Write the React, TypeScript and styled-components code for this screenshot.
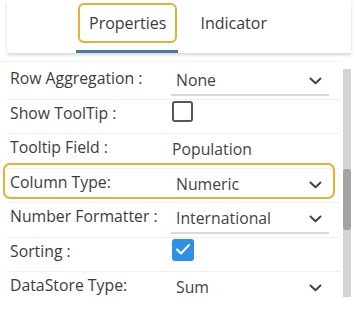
import styled, { createGlobalStyle } from 'styled-components';

const GlobalStyle = createGlobalStyle`
  html, body { margin: 0; padding: 0; background: #fff; }
  body { font-family: "Open Sans", Lato, sans-serif; color: #3d3d3d; }
  * { box-sizing: border-box; }
`;

const Page = styled.div`
  width: 359px;
  height: 325px;
  overflow: hidden;
  background: #fff;
`;

const Header = styled.div`
  margin: 0 8px 0 7px;
  height: 53px;
  background: #fff;
  box-shadow: 0 2px 3px rgba(0, 0, 0, 0.16);
  display: flex;
  align-items: flex-start;
  gap: 16px;
  padding-left: 69px;
`;

const Tab = styled.div<{ $active?: boolean }>`
  padding: 3px 1px 7px 2px;
  border-bottom: 3px solid ${p => (p.$active ? '#4877a6' : 'transparent')};
`;

const TabLabel = styled.div<{ $active?: boolean }>`
  height: 40px;
  display: flex;
  align-items: center;
  padding: 0 ${p => (p.$active ? '9px' : '2px')};
  border: 2px solid ${p => (p.$active ? '#e9ae32' : 'transparent')};
  border-radius: 6px;
  font-size: 16px;
  color: #3b3b3b;
`;

const Body = styled.div`
  display: flex;
  margin-top: 8px;
  height: 236px;
`;

const List = styled.div`
  flex: 1;
  overflow: hidden;
  border-top: 1px solid #f3f3f3;
  padding-top: 3px;
`;

const Row = styled.div<{ $highlight?: boolean }>`
  position: relative;
  height: 34.5px;
  margin-left: 7px;
  padding-left: 3px;
  display: grid;
  grid-template-columns: 161px 158px;
  align-items: start;
  border-bottom: 1px solid #f0f0f0;

  ${p =>
    p.$highlight &&
    `
    &::after {
      content: '';
      position: absolute;
      left: -4px;
      right: 5px;
      top: -6px;
      bottom: 3.5px;
      border: 2px solid #e9ae32;
      border-radius: 7px;
      pointer-events: none;
    }
  `}
`;

const Label = styled.div`
  padding-top: 3px;
  line-height: 20px;
  font-size: 15.8px;
  color: #3d3d3d;
  white-space: nowrap;
`;

const Select = styled.div<{ $plain?: boolean; $pad?: number }>`
  margin-top: 5px;
  height: 26px;
  display: flex;
  align-items: center;
  justify-content: space-between;
  padding: 0 7px 2px ${p => p.$pad ?? 5}px;
  border-bottom: 2px solid ${p => (p.$plain ? 'transparent' : '#d9d9d9')};
  font-size: 15.8px;
  line-height: 1;
  color: #444;
`;

const Checkbox = styled.div<{ $checked?: boolean }>`
  margin: 1px 0 0 1px;
  width: ${p => (p.$checked ? 22 : 21)}px;
  height: ${p => (p.$checked ? 22 : 21)}px;
  border-radius: 3px;
  border: ${p => (p.$checked ? 'none' : '2px solid #565656')};
  background: ${p => (p.$checked ? '#2f8ee6' : '#fff')};
  display: flex;
  align-items: center;
  justify-content: center;
`;

const Track = styled.div`
  width: 8px;
  margin: 8px 8px 0 3px;
  background: #d4d4d4;
`;

const Thumb = styled.div`
  margin-top: 100px;
  height: 61px;
  background: #a3a3a3;
  border-radius: 3px;
`;

const Chevron = () => (
  <svg width="13" height="8" viewBox="0 0 13 8">
    <polyline points="1.5,1.5 6.5,6.2 11.5,1.5" fill="none" stroke="#444" strokeWidth="2" strokeLinecap="round" strokeLinejoin="round" />
  </svg>
);

const Check = () => (
  <svg width="16" height="13" viewBox="0 0 16 13">
    <polyline points="2,6.5 6,10.5 14,2" fill="none" stroke="#fff" strokeWidth="2" strokeLinecap="round" strokeLinejoin="round" />
  </svg>
);

export default function App() {
  return (
    <Page>
      <GlobalStyle />
      <Header>
        <Tab $active>
          <TabLabel $active>Properties</TabLabel>
        </Tab>
        <Tab>
          <TabLabel>Indicator</TabLabel>
        </Tab>
      </Header>
      <Body>
        <List>
          <Row>
            <Label>Row Aggregation :</Label>
            <Select>None<Chevron /></Select>
          </Row>
          <Row>
            <Label>Show ToolTip :</Label>
            <Checkbox />
          </Row>
          <Row>
            <Label>Tooltip Field :</Label>
            <Select $pad={1}>Population</Select>
          </Row>
          <Row $highlight>
            <Label>Column Type:</Label>
            <Select $plain>Numeric<Chevron /></Select>
          </Row>
          <Row>
            <Label>Number Formatter :</Label>
            <Select>International<Chevron /></Select>
          </Row>
          <Row>
            <Label>Sorting :</Label>
            <Checkbox $checked><Check /></Checkbox>
          </Row>
          <Row>
            <Label>DataStore Type:</Label>
            <Select>Sum<Chevron /></Select>
          </Row>
        </List>
        <Track>
          <Thumb />
        </Track>
      </Body>
    </Page>
  );
}
